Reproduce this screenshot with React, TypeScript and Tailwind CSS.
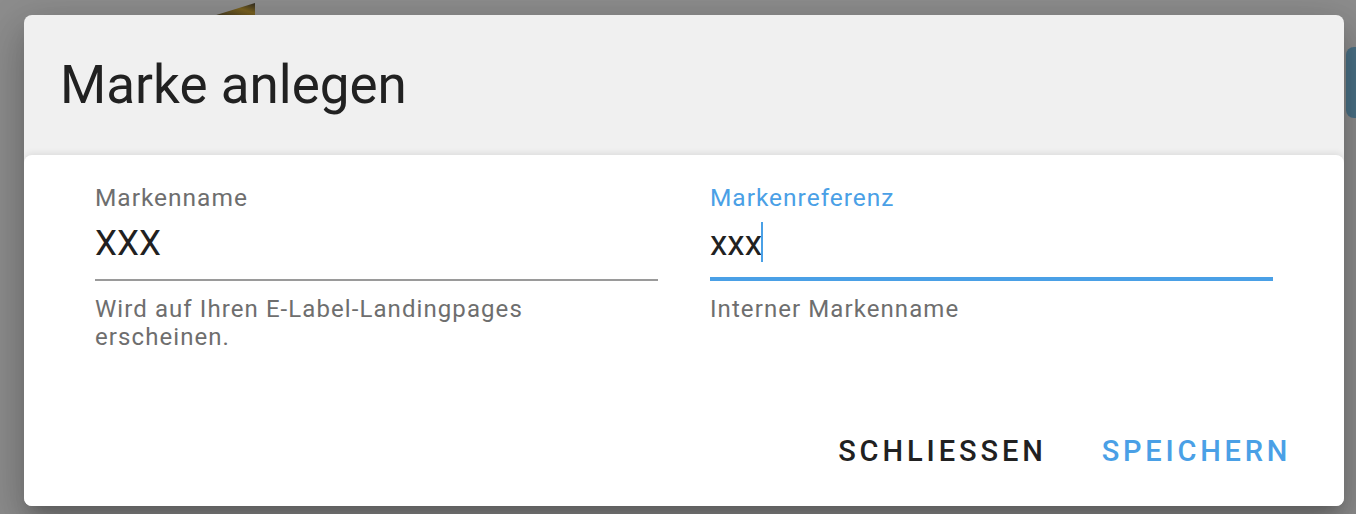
import React from "react";

const font = { fontFamily: "Roboto, 'Noto Sans', sans-serif" };

type FieldProps = {
    label: string;
    value: string;
    helper: React.ReactNode;
    focused?: boolean;
};

function Field({ label, value, helper, focused }: FieldProps) {
    return (
        <div className="flex-1 min-w-0">
            <div className={`text-[24.5px] leading-[24px] tracking-[0.04em] ${focused ? "text-[#4aa0e6]" : "text-[#6e6e6e]"}`}>{label}</div>
            <div className={`mt-[16px] ${focused ? "h-[51px]" : "h-[53px]"}`}>
                <span className="relative inline-block text-[35px] leading-[35px] text-[#212121]">
                    {value}
                    {focused && <span className="absolute -right-[1px] -top-[4px] h-[40px] w-[2px] bg-[#4aa0e6]" />}
                </span>
            </div>
            <div className={focused ? "h-[4px] bg-[#4aa0e6]" : "h-[2px] bg-[#9a9a9a]"} />
            <div className="mt-[14px] text-[24px] leading-[28px] tracking-[0.045em] text-[#6e6e6e]">{helper}</div>
        </div>
    );
}

export default function App() {
    return (
        <div className="relative h-[514px] w-[1356px] overflow-hidden bg-[#8d8d8d]" style={font}>
            {/* page content behind the backdrop */}
            <svg className="absolute left-[205px] top-0" width="52" height="16" viewBox="0 0 52 16">
                <defs>
                    <linearGradient id="g" x1="0" y1="1" x2="1" y2="0">
                        <stop offset="0" stopColor="#3b3322" />
                        <stop offset="0.6" stopColor="#7a6220" />
                        <stop offset="1" stopColor="#2f2a20" />
                    </linearGradient>
                </defs>
                <polygon points="8,16 50,3 50,16" fill="url(#g)" />
            </svg>
            <div className="absolute left-[1346px] top-[47px] h-[71px] w-[30px] rounded-l-[8px] bg-[#4a7186]" />

            <div className="pl-[24px] pt-[15px]">
                <div className="relative flex h-[491px] w-[1320px] flex-col overflow-hidden rounded-[8px] bg-[#f0f0f0] shadow-[0_11px_15px_-7px_rgba(0,0,0,0.2),0_24px_38px_3px_rgba(0,0,0,0.14),0_9px_46px_8px_rgba(0,0,0,0.12)]">
                    <div className="h-[140px] shrink-0 pl-[36px] pt-[44px]">
                        <h2 className="text-[53px] leading-[53px] font-normal text-[#212121]">Marke anlegen</h2>
                    </div>
                    <div className="flex flex-1 flex-col rounded-t-[8px] bg-white shadow-[0_-2px_6px_rgba(0,0,0,0.08)]">
                        <div className="flex gap-[52px] px-[71px] pt-[31px]">
                            <Field
                                label="Markenname"
                                value="XXX"
                                helper={
                                    <>
                                        Wird auf Ihren E-Label-Landingpages
                                        <br />
                                        erscheinen.
                                    </>
                                }
                            />
                            <Field label="Markenreferenz" value="xxx" helper="Interner Markenname" focused />
                        </div>
                        <div className="mt-auto flex justify-end gap-[55px] pb-[40px] pr-[53px]">
                            <button className="text-[29px] leading-[29px] font-medium tracking-[0.135em] text-[#212121]">SCHLIESSEN</button>
                            <button className="text-[29px] leading-[29px] font-medium tracking-[0.13em] text-[#4aa0e6]">SPEICHERN</button>
                        </div>
                    </div>
                </div>
            </div>
        </div>
    );
}
